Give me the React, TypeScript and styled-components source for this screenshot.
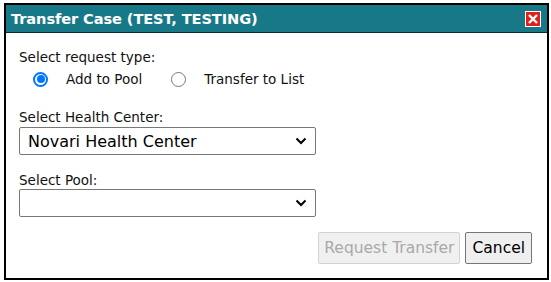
import React from "react"
import styled, { createGlobalStyle } from "styled-components"

const GlobalStyle = createGlobalStyle`
  html, body {
    margin: 0;
    padding: 0;
    background: #ffffff;
  }
  body {
    font-family: "DejaVu Sans", Verdana, sans-serif;
  }
`

const Page = styled.div`
  width: 551px;
  height: 282px;
  padding: 3px 3px 0 4px;
  box-sizing: border-box;
`

const Dialog = styled.div`
  width: 545px;
  height: 277px;
  box-sizing: border-box;
  border: 2px solid #000;
  display: flex;
  flex-direction: column;
`

const TitleBar = styled.div`
  height: 28px;
  box-sizing: border-box;
  background: #177987;
  border-bottom: 1px solid #0c2a30;
  display: flex;
  align-items: center;
  justify-content: space-between;
  padding: 0 6px 0 5px;
`

const Title = styled.h1`
  margin: 0;
  color: #fff;
  font-family: "DejaVu Sans", Tahoma, sans-serif;
  font-weight: bold;
  font-size: 14.6px;
  letter-spacing: -0.1px;
`

const CloseButton = styled.button`
  width: 16px;
  height: 16px;
  padding: 0;
  border: 1px solid #fff;
  background: #e0201c;
  display: flex;
  align-items: center;
  justify-content: center;
  cursor: pointer;
`

const Body = styled.div`
  flex: 1;
  display: flex;
  flex-direction: column;
  padding: 16px 15px 0 13px;
`

const Label = styled.div<{ $top?: number }>`
  font-size: 13.5px;
  color: #111;
  margin-top: ${p => p.$top ?? 0}px;
  line-height: 16px;
`

const RadioRow = styled.div`
  display: flex;
  align-items: center;
  height: 16px;
  margin-top: 6px;
  padding-left: 14px;
`

const RadioOption = styled.label`
  display: flex;
  align-items: center;
  font-size: 13.5px;
  line-height: 16px;
  color: #111;
  margin-right: 29px;
`

const RadioCircle = styled.span<{ $checked?: boolean }>`
  width: 15px;
  height: 15px;
  border-radius: 50%;
  box-sizing: border-box;
  border: ${p => (p.$checked ? "2px solid #0075ff" : "1px solid #777")};
  background: #fff;
  display: flex;
  align-items: center;
  justify-content: center;
  margin-right: 18px;

  &::after {
    content: "";
    display: ${p => (p.$checked ? "block" : "none")};
    width: 8px;
    height: 8px;
    border-radius: 50%;
    background: #0075ff;
  }
`

const Select = styled.div<{ $top: number }>`
  width: 297px;
  height: 28px;
  box-sizing: border-box;
  margin-top: ${p => p.$top}px;
  border: 1px solid #777;
  border-radius: 2px;
  display: flex;
  align-items: center;
  justify-content: space-between;
  padding: 0 8px 0 8px;
  font-size: 16px;
  color: #000;
`

const Footer = styled.div`
  display: flex;
  justify-content: flex-end;
  gap: 5px;
  margin-top: 15px;
`

const Button = styled.button<{ $disabled?: boolean }>`
  height: 32px;
  box-sizing: border-box;
  padding: 0 ${p => (p.$disabled ? 5 : 6)}px;
  font-family: "DejaVu Sans", Verdana, sans-serif;
  font-size: 15.5px;
  border-radius: 2px;
  border: 1px solid ${p => (p.$disabled ? "#d3d3d3" : "#767676")};
  background: ${p => (p.$disabled ? "#f0f0f0" : "#efefef")};
  color: ${p => (p.$disabled ? "#a9a9a9" : "#000")};
`

const Chevron = () => (
  <svg width="12" height="8" viewBox="0 0 12 8">
    <path d="M1.5 1.5 L6 6 L10.5 1.5" fill="none" stroke="#000" strokeWidth="2" />
  </svg>
)

export default function App() {
  return (
    <>
      <GlobalStyle />
      <Page>
        <Dialog>
          <TitleBar>
            <Title>Transfer Case (TEST, TESTING)</Title>
            <CloseButton aria-label="Close">
              <svg width="12" height="12" viewBox="0 0 12 12">
                <path d="M2 2 L10 10 M10 2 L2 10" stroke="#fff" strokeWidth="2.4" />
              </svg>
            </CloseButton>
          </TitleBar>
          <Body>
            <Label>Select request type:</Label>
            <RadioRow>
              <RadioOption>
                <RadioCircle $checked />
                Add to Pool
              </RadioOption>
              <RadioOption>
                <RadioCircle />
                Transfer to List
              </RadioOption>
            </RadioRow>
            <Label $top={22}>Select Health Center:</Label>
            <Select $top={2}>
              Novari Health Center
              <Chevron />
            </Select>
            <Label $top={17}>Select Pool:</Label>
            <Select $top={1}>
              <span />
              <Chevron />
            </Select>
            <Footer>
              <Button $disabled disabled>Request Transfer</Button>
              <Button>Cancel</Button>
            </Footer>
          </Body>
        </Dialog>
      </Page>
    </>
  )
}
